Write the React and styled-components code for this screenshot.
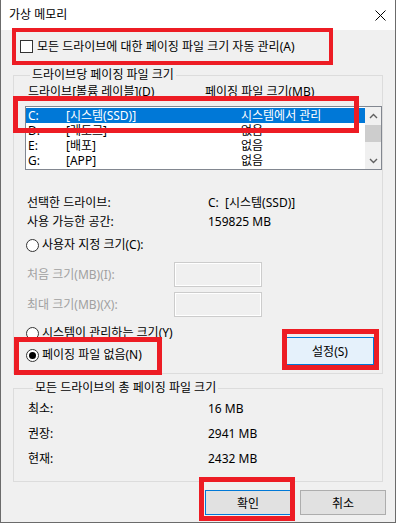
import React from 'react'
import styled, { createGlobalStyle } from 'styled-components'

const GlobalStyle = createGlobalStyle`
    html, body {
        margin: 0;
        padding: 0;
        background: #fff;
    }
    body {
        font-family: "Noto Sans", "Noto Sans CJK KR", sans-serif;
        font-size: 12px;
        color: #000;
    }
    * {
        box-sizing: border-box;
    }
`;

const drives = [
    { letter: 'C:', label: '[시스템(SSD)]', size: '시스템에서 관리', selected: true },
    { letter: 'D:', label: '[레토르]', size: '없음' },
    { letter: 'E:', label: '[배포]', size: '없음' },
    { letter: 'G:', label: '[APP]', size: '없음' },
]

const totals = [
    ['최소:', '16 MB'],
    ['권장:', '2941 MB'],
    ['현재:', '2432 MB'],
]

const App = () => {
    return (
        <>
            <GlobalStyle />
            <Window>
                <TitleBar>
                    <span>가상 메모리</span>
                    <svg width="11" height="11" viewBox="0 0 11 11">
                        <path d="M0.5 0.5 L10.5 10.5 M10.5 0.5 L0.5 10.5" stroke="#000" strokeWidth="1" />
                    </svg>
                </TitleBar>
                <Body>
                    <AutoRow>
                        <CheckBox />
                        <span>모든 드라이브에 대한 페이징 파일 크기 자동 관리(A)</span>
                    </AutoRow>

                    <Group $top={12} $pl={11} $pb={8}>
                        <Legend>드라이브당 페이징 파일 크기</Legend>
                        <Header>
                            <span>드라이브[볼륨 레이블](D)</span>
                            <span>페이징 파일 크기(MB)</span>
                        </Header>
                        <ListBox>
                            <Rows>
                                {drives.map((d) => (
                                    <DriveRow key={d.letter} $selected={d.selected}>
                                        <span>{d.letter}</span>
                                        <span>{d.label}</span>
                                        <span>{d.size}</span>
                                    </DriveRow>
                                ))}
                            </Rows>
                            <ScrollBar>
                                <Arrow>
                                    <svg width="9" height="6" viewBox="0 0 9 6">
                                        <path d="M1 5 L4.5 1.5 L8 5" fill="none" stroke="#606060" strokeWidth="1.4" />
                                    </svg>
                                </Arrow>
                                <Thumb />
                                <Spacer />
                                <Arrow>
                                    <svg width="9" height="6" viewBox="0 0 9 6">
                                        <path d="M1 1 L4.5 4.5 L8 1" fill="none" stroke="#606060" strokeWidth="1.4" />
                                    </svg>
                                </Arrow>
                            </ScrollBar>
                        </ListBox>

                        <Info>
                            <InfoRow>
                                <span>선택한 드라이브:</span>
                                <span>C:&nbsp;&nbsp;[시스템(SSD)]</span>
                            </InfoRow>
                            <InfoRow>
                                <span>사용 가능한 공간:</span>
                                <span>159825 MB</span>
                            </InfoRow>
                        </Info>

                        <RadioRow $top={5}>
                            <Radio />
                            <span>사용자 지정 크기(C):</span>
                        </RadioRow>
                        <SizeRow $top={8}>
                            <SizeLabel>처음 크기(MB)(I):</SizeLabel>
                            <SizeInput />
                        </SizeRow>
                        <SizeRow $top={5}>
                            <SizeLabel>최대 크기(MB)(X):</SizeLabel>
                            <SizeInput />
                        </SizeRow>

                        <BottomRow>
                            <RadioColumn>
                                <RadioRow>
                                    <Radio />
                                    <span>시스템이 관리하는 크기(Y)</span>
                                </RadioRow>
                                <RadioRow>
                                    <Radio $checked />
                                    <span>페이징 파일 없음(N)</span>
                                </RadioRow>
                            </RadioColumn>
                            <SetButton>설정(S)</SetButton>
                        </BottomRow>
                    </Group>

                    <Group $top={6} $pl={14} $pb={10}>
                        <Legend>모든 드라이브의 총 페이징 파일 크기</Legend>
                        {totals.map(([k, v]) => (
                            <TotalRow key={k}>
                                <span>{k}</span>
                                <span>{v}</span>
                            </TotalRow>
                        ))}
                    </Group>

                    <Buttons>
                        <DialogButton $default>확인</DialogButton>
                        <DialogButton>취소</DialogButton>
                    </Buttons>
                </Body>

                <Mark $x={11} $y={28} $w={321} $h={37} $t={4} />
                <Mark $x={12} $y={96} $w={346} $h={37} $t={5} />
                <Mark $x={13} $y={337} $w={148} $h={38} $t={5} />
                <Mark $x={281} $y={329} $w={97} $h={41} $t={5} />
                <Mark $x={198} $y={477} $w={96} $h={44} $t={5} />
            </Window>
        </>
    )
}

export default App

const Window = styled.div`
    position: relative;
    width: 396px;
    height: 523px;
    display: flex;
    flex-direction: column;
    background: #f0f0f0;
    border: 1px solid #6b6b6b;
    border-top: none;
    overflow: hidden;
`;

const TitleBar = styled.div`
    height: 30px;
    flex-shrink: 0;
    display: flex;
    align-items: center;
    justify-content: space-between;
    padding: 0 9px 0 8px;
    background: #fff;
    line-height: 16px;
`;

const Body = styled.div`
    flex: 1;
    display: flex;
    flex-direction: column;
    padding: 0 12px;
`;

const AutoRow = styled.div`
    margin-top: 8px;
    height: 17px;
    display: flex;
    align-items: center;
    gap: 4px;
    padding-left: 7px;
    line-height: 17px;
`;

const CheckBox = styled.div`
    width: 13px;
    height: 13px;
    border: 1px solid #333;
    background: #fff;
`;

const Group = styled.fieldset`
    margin: ${(p) => p.$top}px 0 0;
    padding: 0 0 ${(p) => p.$pb}px ${(p) => p.$pl}px;
    border: 1px solid #dcdcdc;
    min-width: 0;
`;

const Legend = styled.legend`
    padding: 0 2px;
    margin-left: 5px;
    height: 16px;
    line-height: 16px;
`;

const Header = styled.div`
    display: grid;
    grid-template-columns: 177px 1fr;
    margin-top: 1px;
    padding-left: 3px;
    height: 16px;
    line-height: 16px;
`;

const ListBox = styled.div`
    margin-top: 6px;
    height: 64px;
    display: flex;
    border: 1px solid #828790;
    background: #fff;
`;

const Rows = styled.div`
    flex: 1;
    padding-top: 1px;
`;

const DriveRow = styled.div`
    display: grid;
    grid-template-columns: 38px 175px 1fr;
    height: 15px;
    line-height: 15px;
    padding-left: 2px;
    white-space: nowrap;
    background: ${(p) => (p.$selected ? '#0078d7' : 'transparent')};
    color: ${(p) => (p.$selected ? '#fff' : '#000')};
`;

const ScrollBar = styled.div`
    width: 16px;
    display: flex;
    flex-direction: column;
    background: #f0f0f0;
`;

const Arrow = styled.div`
    height: 17px;
    display: flex;
    align-items: center;
    justify-content: center;
`;

const Thumb = styled.div`
    height: 17px;
    margin-top: 1px;
    background: #cdcdcd;
`;

const Spacer = styled.div`
    flex: 1;
`;

const Info = styled.div`
    margin-top: 23px;
`;

const InfoRow = styled.div`
    display: grid;
    grid-template-columns: 181px 1fr;
    padding-left: 2px;
    height: 19px;
    line-height: 19px;
`;

const RadioRow = styled.div`
    margin-top: ${(p) => p.$top || 0}px;
    height: 18px;
    display: flex;
    align-items: center;
    gap: 3px;
    padding-left: 1px;
    line-height: 18px;
`;

const Radio = styled.div`
    width: 13px;
    height: 13px;
    border-radius: 50%;
    border: 1px solid #333;
    background: #fff;
    display: flex;
    align-items: center;
    justify-content: center;

    &::after {
        content: '';
        display: ${(p) => (p.$checked ? 'block' : 'none')};
        width: 7px;
        height: 7px;
        border-radius: 50%;
        background: #000;
    }
`;

const SizeRow = styled.div`
    margin-top: ${(p) => p.$top}px;
    height: 25px;
    display: flex;
    align-items: center;
    padding-left: 2px;
`;

const SizeLabel = styled.span`
    width: 147px;
    color: #a0a0a0;
    line-height: 16px;
`;

const SizeInput = styled.div`
    width: 88px;
    height: 25px;
    border: 1px solid #cccccc;
    box-shadow: inset 0 0 0 1px #fff;
    background: #f0f0f0;
`;

const BottomRow = styled.div`
    margin-top: 7px;
    display: flex;
    justify-content: space-between;
    align-items: flex-end;
    padding-right: 8px;
`;

const RadioColumn = styled.div`
    display: flex;
    flex-direction: column;
    gap: 4px;
    padding-bottom: 1px;
`;

const SetButton = styled.button`
    width: 88px;
    height: 28px;
    padding: 0;
    border: 1px solid #0078d7;
    background: #e5f1fb;
    font: inherit;
    color: #000;
`;

const TotalRow = styled.div`
    display: grid;
    grid-template-columns: 180px 1fr;
    height: 25px;
    line-height: 25px;
`;

const Buttons = styled.div`
    margin-top: 8px;
    margin-right: -3px;
    display: flex;
    justify-content: flex-end;
    gap: 9px;
`;

const DialogButton = styled.button`
    width: 86px;
    height: 25px;
    padding: 0;
    border: 1px solid ${(p) => (p.$default ? '#0078d7' : '#adadad')};
    background: #e1e1e1;
    font: inherit;
    color: #000;
`;

const Mark = styled.div`
    position: absolute;
    left: ${(p) => p.$x}px;
    top: ${(p) => p.$y}px;
    width: ${(p) => p.$w}px;
    height: ${(p) => p.$h}px;
    border: ${(p) => p.$t}px solid #ed1c24;
    pointer-events: none;
`;
